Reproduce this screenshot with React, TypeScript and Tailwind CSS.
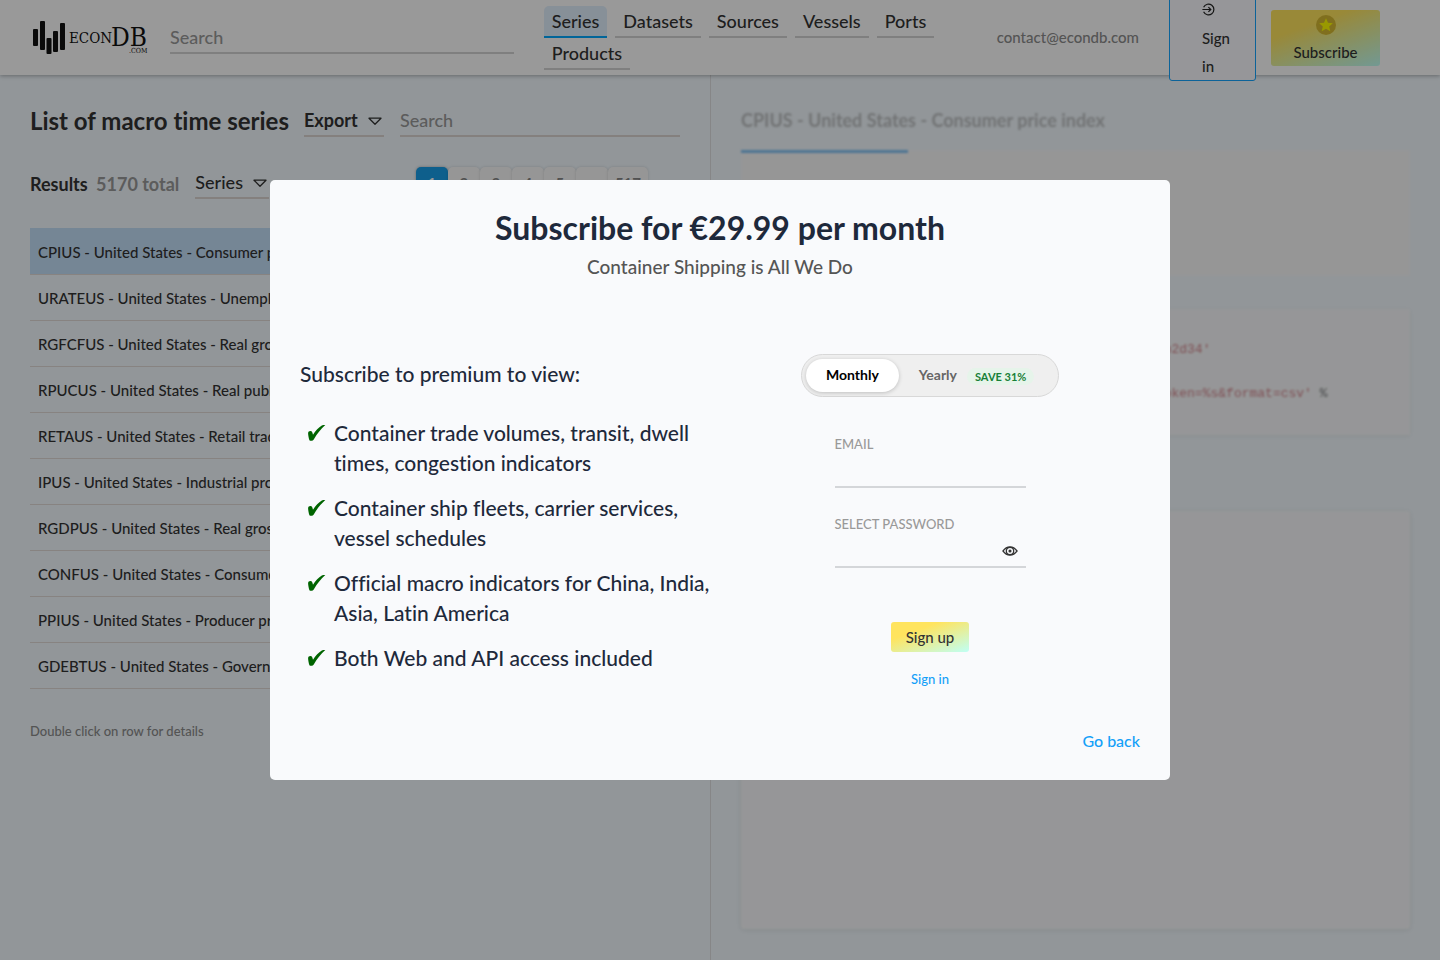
import { useState } from "react";

const navItems = ["Series", "Datasets", "Sources", "Vessels", "Ports", "Products"];

const seriesRows = [
  "CPIUS - United States - Consumer price index",
  "URATEUS - United States - Unemployment",
  "RGFCFUS - United States - Real gross fixed capital formation",
  "RPUCUS - United States - Real public consumption",
  "RETAUS - United States - Retail trade",
  "IPUS - United States - Industrial production",
  "RGDPUS - United States - Real gross domestic product",
  "CONFUS - United States - Consumer confidence index",
  "PPIUS - United States - Producer price index",
  "GDEBTUS - United States - Government debt",
];

const pages = ["1", "2", "3", "4", "5", "...", "517"];

const benefits = [
  "Container trade volumes, transit, dwell times, congestion indicators",
  "Container ship fleets, carrier services, vessel schedules",
  "Official macro indicators for China, India, Asia, Latin America",
  "Both Web and API access included",
];

function Logo() {
  return (
    <svg width="116" height="36" viewBox="0 0 116 36" role="img" aria-label="EconDB.com" fill="#111">
      <rect x="0" y="9" width="5" height="17" rx="1" />
      <rect x="7" y="1" width="5" height="29" rx="1" />
      <rect x="13.500" y="18" width="5" height="16" rx="1" />
      <rect x="20" y="11" width="5" height="21" rx="1" />
      <rect x="27" y="3" width="5" height="27" rx="1" />
      <g className="font-['DejaVu_Serif_Condensed','DejaVu_Serif',serif] font-normal">
        <text x="36" y="23" fontSize="15">ECON</text>
        <text x="78" y="26" fontSize="26">DB</text>
        <text x="96" y="33" fontSize="7">.COM</text>
      </g>
    </svg>
  );
}

function Triangle() {
  return (
    <svg className="pointer-events-none absolute right-0 top-1/2 -mt-[3px]" width="18" height="9" viewBox="0 0 18 9" fill="none" stroke="#333" strokeWidth="1.3" strokeLinejoin="round">
      <path d="M3 1.2h12L9 7.2z" />
    </svg>
  );
}

function LoginIcon() {
  return (
    <svg width="13" height="13" viewBox="0 0 13 13" fill="none" stroke="#222" strokeWidth="1.2">
      <path d="M1.6 4.2A5.4 5.4 0 1 1 1.6 8.8" />
      <path d="M.4 6.5H8.6M6.4 4.1 8.8 6.5 6.4 8.9" />
    </svg>
  );
}

function StarBadge() {
  return (
    <svg width="20" height="20" viewBox="0 0 20 20">
      <circle cx="10" cy="10" r="10" fill="#d6ba33" />
      <path d="M10 3.2 12 7.7l4.8.5-3.6 3.2 1.1 4.8L10 13.8l-4.3 2.4 1.1-4.8L3.2 8.2 8 7.7z" fill="#ffff00" />
    </svg>
  );
}

function EyeIcon() {
  return (
    <svg width="16" height="10" viewBox="0 0 16 10" fill="none" stroke="#333" strokeWidth="1.3">
      <path d="M1 5C3 2.2 5.3 1 8 1s5 1.200 7 4C13 7.800 10.700 9 8 9S3 7.800 1 5z" />
      <circle cx="8" cy="5" r="3.700" />
      <circle cx="8" cy="5" r=".9" fill="#333" />
    </svg>
  );
}

function CheckMark() {
  return (
    <svg aria-hidden="true" className="ml-2 mr-2 mt-[7px] shrink-0" width="18" height="16" viewBox="0 0 18 16" fill="#006400">
      <path d="M.1 8.200C.1 6.800 1.200 5.900 2.500 6c1.200.100 1.700.800 2 1.900l.5 1.800C7.600 5.800 10.600 2.400 13.800.6c.9-.5 1.800-.6 3.500-.6C12.600 4.400 9 8.800 5.900 14.200 5.200 15.300 4.400 15.800 3 15.800c-1.300 0-1.700-.4-2-1.800C.6 12.100.1 9.800.1 8.200z" />
    </svg>
  );
}

function Header() {
  return (
    <header className="relative z-10 flex h-[75px] items-center bg-white px-[30px] shadow-[0_1px_4px_rgba(0,0,0,0.3)]">
      <a href="#home" className="ml-[3px] mr-[21px] shrink-0">
        <Logo />
      </a>
      <input
        type="search"
        aria-label="Search site"
        placeholder="Search"
        className="h-8 min-w-0 flex-1 border-b-2 border-[#d4d4d4] bg-transparent text-lg outline-none placeholder:text-[#999]"
      />
      <nav className="ml-[30px] flex w-[394px] shrink-0 flex-wrap gap-x-2">
        {navItems.map((item, i) => (
          <a
            key={item}
            href={`#${item.toLowerCase()}`}
            className={
              i === 0
                ? "rounded-t-[5px] border-b-2 border-[#00a8ff] bg-[#e2f0fd] px-2 text-lg leading-[30px]"
                : "border-b-2 border-[#d4d4d4] px-2 text-lg leading-[30px]"
            }
          >
            {item}
          </a>
        ))}
      </nav>
      <a href="mailto:contact@econdb.com" className="ml-[59px] text-[15px] text-[#8c8c8c]">
        contact@econdb.com
      </a>
      <button
        type="button"
        className="ml-[30px] flex w-[87px] shrink-0 flex-col items-start rounded-[3px] border border-[#14a5ff] bg-[#fafbff] pl-8 pr-6 text-left text-[15px] leading-7"
      >
        <span className="flex h-7 items-center">
          <LoginIcon />
        </span>
        Sign in
      </button>
      <button
        type="button"
        className="ml-[15px] mr-[30px] flex w-[109px] shrink-0 flex-col items-center rounded-[3px] bg-[linear-gradient(160deg,#ffe45e_30%,#bffff5_100%)] text-[15px] leading-7"
      >
        <span className="flex h-7 items-center pt-[2px]">
          <StarBadge />
        </span>
        Subscribe
      </button>
    </header>
  );
}

function SeriesList() {
  return (
    <section className="w-[711px] shrink-0 border-r border-[#dfe0e2] px-[30px] pt-[30px]">
      <div className="flex items-center">
        <h1 className="mr-[15px] whitespace-nowrap text-2xl font-bold">List of macro time series</h1>
        <div className="relative mr-4 w-20 border-b-2 border-[#ddd6d2]">
          <select aria-label="Export" className="h-[30px] w-full appearance-none bg-transparent text-lg font-bold outline-none">
            <option>Export</option>
          </select>
          <Triangle />
        </div>
        <input
          type="search"
          aria-label="Search series"
          placeholder="Search"
          className="h-8 min-w-0 flex-1 border-b-2 border-[#ddd6d2] bg-transparent text-lg outline-none placeholder:text-[#999]"
        />
      </div>
      <div className="mt-[30px] flex items-start">
        <h2 className="mr-4 mt-[2px] whitespace-nowrap text-lg leading-[30px] font-bold">
          Results <span className="ml-1 text-[#999]">5170 total</span>
        </h2>
        <div className="relative w-[74px] border-b-2 border-[#ddd6d2]">
          <select aria-label="Result type" className="h-[30px] w-full appearance-none bg-transparent text-lg font-medium outline-none">
            <option>Series</option>
          </select>
          <Triangle />
        </div>
        <div className="ml-auto mr-3 flex h-8 items-center">
          <button type="button" className="mr-3 w-3 text-lg">‹</button>
          {pages.map((p, i) => (
            <button
              key={p}
              type="button"
              className={
                i === 0
                  ? "h-8 w-8 rounded-[5px] bg-[#189fe9] text-[15px] font-bold text-white shadow-[0_0_3px_rgba(0,0,0,0.3)]"
                  : "h-8 min-w-8 rounded-[5px] bg-[#fafafa] px-[7px] text-[15px] font-bold text-[#888] shadow-[0_0_3px_rgba(0,0,0,0.15)]"
              }
            >
              {p}
            </button>
          ))}
          <button type="button" className="ml-2 w-3 text-lg">›</button>
        </div>
      </div>
      <table className="mt-[29px] w-full text-left text-[15px]">
        <tbody>
          {seriesRows.map((row, i) => (
            <tr key={row} className={i === 0 ? "h-[46px] border-b border-[#e2dad8] bg-[#c3dff9]" : "h-[46px] border-b border-[#e2dad8]"}>
              <td className="px-2 pt-[2px]">{row}</td>
            </tr>
          ))}
        </tbody>
      </table>
      <p className="mt-8 text-[13px] leading-5 text-[#8c8c8c]">Double click on row for details</p>
    </section>
  );
}

function SeriesDetail() {
  return (
    <section className="min-w-0 flex-1 px-[30px] pb-[30px] pt-[30px] opacity-60 blur-[1px]">
      <h2 className="h-[45px] text-lg leading-[30px] font-bold text-[#999]">CPIUS - United States - Consumer price index</h2>
      <div className="h-[126px] bg-[#fffbfa]">
        <div className="h-[3px] w-1/4 bg-[#3a9fee]" />
      </div>
      <pre className="mt-[33px] h-[126px] overflow-hidden bg-[#fffdfc] px-[17px] py-[30px] font-['Liberation_Mono',monospace] text-[13px] leading-[22px] text-[#c03540] shadow-[0_1px_4px_rgba(0,0,0,0.1)]">
        {"access_token = '3f6a91c07be845d2a7c19e40b8f35a6de1c9b2d34'\n\n"}
        {"requests.get('https://econdb.com/api/series/CPIUS/?token=%s&format=csv'"}
        <span className="text-[#222]"> %</span>
      </pre>
      <div className="mt-[76px] h-[418px] rounded-[3px] bg-[#fffdfc] shadow-[0_1px_5px_rgba(0,0,0,0.15)]" />
    </section>
  );
}

function SubscribeDialog() {
  const [plan, setPlan] = useState("monthly");
  const [visible, setVisible] = useState(false);
  const active = "h-[33px] whitespace-nowrap rounded-full bg-white px-5 pb-[2px] text-[14px] font-bold text-black shadow-[0_1px_4px_rgba(0,0,0,0.2)]";
  const idle = "h-[33px] whitespace-nowrap rounded-full px-5 pb-[2px] text-[14px] font-bold text-[#666]";
  return (
    <div className="fixed inset-0 z-20 flex items-center justify-center bg-black/40">
      <div
        role="dialog"
        aria-modal="true"
        aria-labelledby="dialog-title"
        className="flex min-h-[600px] w-full max-w-[900px] flex-col rounded-[5px] bg-[#f9fafc] px-[30px] pb-[25px] pt-[28px] text-[#1e293b]"
      >
        <h2 id="dialog-title" className="text-center text-[32px] leading-10 font-bold">
          Subscribe for €29.99 per month
        </h2>
        <p className="mt-1 text-center text-[19px] leading-[30px] text-[#555]">Container Shipping is All We Do</p>
        <div className="mt-[72px] grid grid-cols-2">
          <div className="pt-[5px] text-[21px] leading-[30px]">
            <p>Subscribe to premium to view:</p>
            <ul className="mt-[29px] flex flex-col gap-[15px] pr-[10px]">
              {benefits.map((b) => (
                <li key={b} className="flex items-start">
                  <CheckMark />
                  {b}
                </li>
              ))}
            </ul>
          </div>
          <form className="flex flex-col items-center" onSubmit={(e) => e.preventDefault()}>
            <div className="flex h-[43px] w-[258px] items-center rounded-full border border-[#d8d8d8] bg-[#efefef] px-1">
              <button type="button" aria-pressed={plan === "monthly"} onClick={() => setPlan("monthly")} className={plan === "monthly" ? active : idle}>
                Monthly
              </button>
              <button type="button" aria-pressed={plan === "yearly"} onClick={() => setPlan("yearly")} className={plan === "yearly" ? active : idle}>
                Yearly
                <span className="ml-[10px] rounded-full bg-[#e6f4ea] px-2 py-[2px] align-[-1px] text-[11px] text-[#188038]">SAVE 31%</span>
              </button>
            </div>
            <label className="mt-[35px] flex w-[191px] flex-col text-[13px] leading-6 text-[#999]">
              EMAIL
              <input type="email" className="h-8 border-b-2 border-[#d4d6d9] bg-transparent text-base text-[#333] outline-none" />
            </label>
            <div className="relative mt-6 w-[191px]">
              <label className="flex flex-col text-[13px] leading-6 text-[#999]">
                SELECT PASSWORD
                <input
                  type={visible ? "text" : "password"}
                  className="h-8 border-b-2 border-[#d4d6d9] bg-transparent pr-8 text-base text-[#333] outline-none"
                />
              </label>
              <button type="button" aria-label="Show password" onClick={() => setVisible(!visible)} className="absolute bottom-3 right-2">
                <EyeIcon />
              </button>
            </div>
            <button
              type="submit"
              className="mt-[54px] h-[30px] rounded-[3px] bg-[linear-gradient(160deg,#ffe45e_30%,#bffff5_100%)] px-[15px] text-[15px] text-[#333]"
            >
              Sign up
            </button>
            <a href="#signin" className="mt-[17px] text-[13px] leading-5 text-[#14a0f8]">
              Sign in
            </a>
          </form>
        </div>
        <a href="#back" className="mt-auto self-end text-base leading-7 text-[#14a0f8]">
          Go back
        </a>
      </div>
    </div>
  );
}

export default function App() {
  return (
    <div className="flex min-h-screen flex-col bg-[#f3faff] font-[Lato,sans-serif] font-medium text-[#333] [font-variant-ligatures:none]">
      <Header />
      <main className="flex flex-1">
        <SeriesList />
        <SeriesDetail />
      </main>
      <SubscribeDialog />
    </div>
  );
}
